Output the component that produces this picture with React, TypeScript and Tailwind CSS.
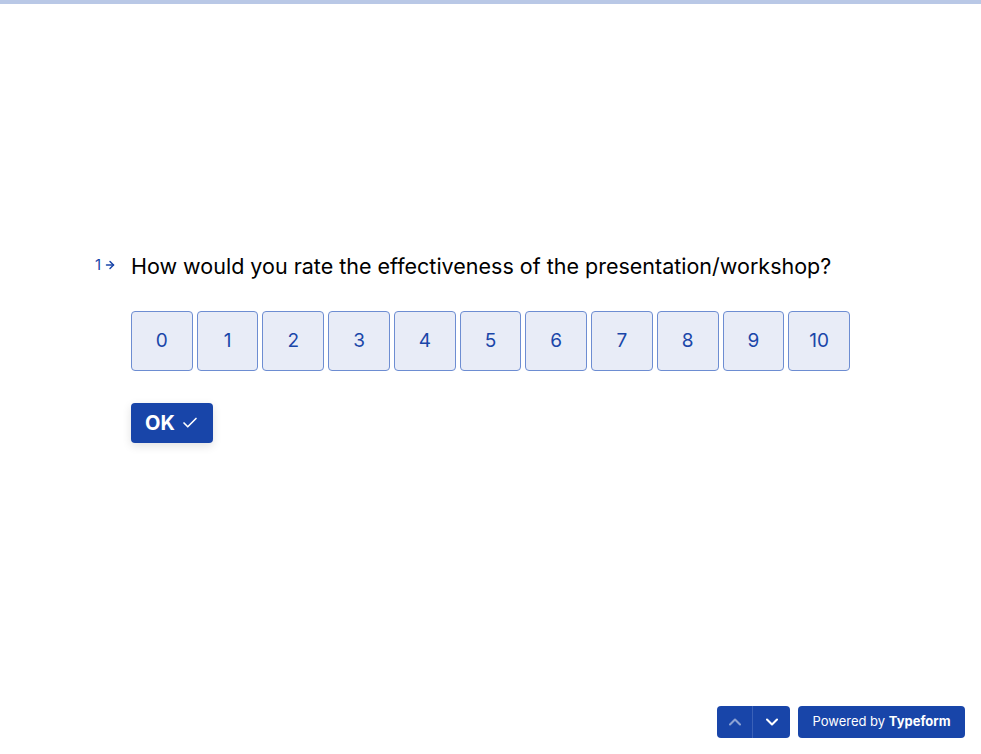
import { Check, ChevronUp, ChevronDown, ArrowRight } from 'lucide-react'

const options = [0, 1, 2, 3, 4, 5, 6, 7, 8, 9, 10]

export default function App() {
  return (
    <div className="relative w-[981px] h-[754px] bg-white overflow-hidden font-['Inter',sans-serif]">
      {/* progress */}
      <div className="h-1 w-full bg-[#b9c8e6]" />

      <div className="pt-[246px] pl-[95px]">
        <div className="flex items-start">
          <div className="w-[36px] flex items-center gap-[3px] pt-[7px] text-[#1a46a9]">
            <span className="text-[15px] leading-4">1</span>
            <ArrowRight className="w-3 h-3" strokeWidth={3} />
          </div>
          <h1 className="text-[21.5px] leading-8 text-black">
            How would you rate the effectiveness of the presentation/workshop?
          </h1>
        </div>

        <div className="ml-[36px] mt-[29px] grid grid-cols-11 gap-[4px] w-[719px]">
          {options.map((n) => (
            <button
              key={n}
              className="h-[60px] rounded-[4px] border border-[#6d8dd2] bg-[#e8ecf7] text-[19px] text-[#1a46a9]"
            >
              {n}
            </button>
          ))}
        </div>

        <button className="ml-[36px] mt-[32px] h-10 w-[82px] rounded-[4px] bg-[#1845a9] text-white flex items-center justify-center gap-[6px] shadow-[0_3px_10px_rgba(0,0,0,0.12)]">
          <span className="text-[20px] font-bold">OK</span>
          <Check className="w-[18px] h-[18px]" strokeWidth={2.2} />
        </button>
      </div>

      <div className="absolute right-4 bottom-4 flex gap-2">
        <div className="flex h-8 rounded-[4px] overflow-hidden bg-[#1845a9]">
          <button className="w-9 flex items-center justify-center text-white/50 border-r border-[#3a61b8]">
            <ChevronUp className="w-5 h-5" strokeWidth={2.5} />
          </button>
          <button className="w-[37px] flex items-center justify-center text-white">
            <ChevronDown className="w-5 h-5" strokeWidth={2.5} />
          </button>
        </div>
        <div className="h-8 w-[167px] rounded-[4px] bg-[#1845a9] text-white text-[13px] flex items-center justify-center">
          Powered by&nbsp;<span className="font-bold">Typeform</span>
        </div>
      </div>
    </div>
  )
}
